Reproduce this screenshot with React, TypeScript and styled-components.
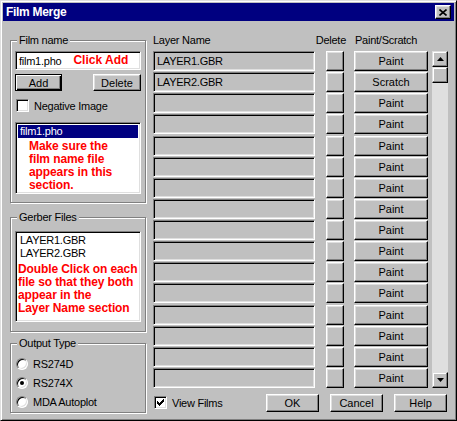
import { Fragment } from "react"
import styled, { createGlobalStyle } from "styled-components"

const GlobalStyle = createGlobalStyle`
  html, body {
    margin: 0;
    padding: 0;
    background: #c0c0c0;
  }
  body {
    font-family: "Liberation Sans", Arial, sans-serif;
    font-size: 11px;
    letter-spacing: -0.25px;
    color: #000;
  }
  * {
    box-sizing: border-box;
  }
`

const LAYERS = [
  { name: "LAYER1.GBR", mode: "Paint" },
  { name: "LAYER2.GBR", mode: "Scratch" },
  ...Array.from({ length: 14 }, () => ({ name: "", mode: "Paint" })),
]

const COLUMNS = "162px 19px 74px"

const Window = styled.div`
  width: 457px;
  height: 421px;
  background: #c0c0c0;
  border: 1px solid;
  border-color: #dfdfdf #000 #000 #dfdfdf;
  box-shadow: inset 1px 1px 0 #fff, inset -1px -1px 0 #808080;
  padding: 2px;
  display: flex;
  flex-direction: column;
`

const TitleBar = styled.div`
  height: 18px;
  background: #000080;
  display: flex;
  align-items: center;
  justify-content: space-between;
  padding: 0 3px 0 3px;
`

const Title = styled.span`
  color: #fff;
  font-weight: bold;
  font-size: 12px;
  letter-spacing: -0.3px;
`

const CloseButton = styled.div`
  width: 16px;
  height: 14px;
  background: #c0c0c0;
  border: 1px solid;
  border-color: #fff #000 #000 #fff;
  box-shadow: inset -1px -1px 0 #808080, inset 1px 1px 0 #dfdfdf;
  display: flex;
  align-items: center;
  justify-content: center;
`

const Body = styled.div`
  flex: 1;
  display: flex;
  gap: 6px;
  padding: 13px 0 0 7px;
`

const LeftColumn = styled.div`
  width: 137px;
  display: flex;
  flex-direction: column;
`

const Group = styled.fieldset<{ $top?: number; $pad?: string }>`
  width: 136px;
  margin: ${(p) => p.$top ?? 0}px 0 0 0;
  padding: ${(p) => p.$pad ?? "4px 4px 8px 4px"};
  border: 1px solid #808080;
  box-shadow: inset 1px 1px 0 #fff, 1px 1px 0 #fff;
  min-width: 0;
`

const Legend = styled.legend`
  padding: 0 2px;
  margin-left: 2px;
  line-height: 13px;
  background: #c0c0c0;
`

const Sunken = styled.div<{ $bg?: string }>`
  background: ${(p) => p.$bg ?? "#fff"};
  border: 1px solid;
  border-color: #808080 #fff #fff #808080;
  box-shadow: inset 1px 1px 0 #000, inset -1px -1px 0 #dfdfdf;
`

const TextInput = styled(Sunken)`
  height: 19px;
  display: flex;
  align-items: center;
  padding-left: 3px;
`

const Hint = styled.span<{ $left?: number }>`
  color: #ff0000;
  font-weight: bold;
  font-size: 12px;
  letter-spacing: 0;
  line-height: 13px;
  margin-left: ${(p) => p.$left ?? 0}px;
`

const HintBlock = styled.div<{ $indent: number; $top: number }>`
  color: #ff0000;
  font-weight: bold;
  font-size: 12px;
  letter-spacing: -0.1px;
  line-height: 13px;
  white-space: nowrap;
  padding-left: ${(p) => p.$indent}px;
  margin-top: ${(p) => p.$top}px;
`

const ButtonRow = styled.div`
  display: flex;
  justify-content: space-between;
  margin-top: 4px;
`

const Button = styled.button<{ $w?: number; $h?: number; $default?: boolean }>`
  width: ${(p) => (p.$w ? `${p.$w}px` : "100%")};
  height: ${(p) => p.$h ?? 20}px;
  padding: 0;
  margin: 0;
  font: inherit;
  color: #000;
  background: #c0c0c0;
  border: 1px solid;
  border-color: ${(p) => (p.$default ? "#000" : "#fff #000 #000 #fff")};
  box-shadow: ${(p) =>
    p.$default
      ? "inset 1px 1px 0 #fff, inset -1px -1px 0 #000, inset -2px -2px 0 #808080"
      : "inset -1px -1px 0 #808080, inset 1px 1px 0 #dfdfdf"};
  display: flex;
  align-items: center;
  justify-content: center;
`

const CheckRow = styled.label<{ $top?: number }>`
  display: flex;
  align-items: center;
  gap: 5px;
  height: 13px;
  margin-top: ${(p) => p.$top ?? 0}px;
  padding-left: 1px;
`

const CheckBox = styled(Sunken)`
  width: 13px;
  height: 13px;
  display: flex;
  align-items: center;
  justify-content: center;
  flex-shrink: 0;
`

const Radio = styled.span<{ $on?: boolean }>`
  position: relative;
  width: 12px;
  height: 12px;
  border-radius: 50%;
  background: #fff;
  border: 1px solid;
  border-color: #808080 #fff #fff #808080;
  box-shadow: inset 1px 1px 0 #000, inset -1px -1px 0 #dfdfdf;
  flex-shrink: 0;

  &::after {
    content: "";
    display: ${(p) => (p.$on ? "block" : "none")};
    position: absolute;
    left: 3px;
    top: 3px;
    width: 4px;
    height: 4px;
    border-radius: 50%;
    background: #000;
  }
`

const ListBox = styled(Sunken)<{ $h: number; $top: number }>`
  height: ${(p) => p.$h}px;
  margin-top: ${(p) => p.$top}px;
  padding: 2px;
  overflow: hidden;
`

const ListItem = styled.div<{ $selected?: boolean }>`
  height: 13px;
  line-height: 13px;
  padding-left: 2px;
  background: ${(p) => (p.$selected ? "#000080" : "transparent")};
  color: ${(p) => (p.$selected ? "#fff" : "#000")};
`

const RadioList = styled.div`
  display: flex;
  flex-direction: column;
  gap: 6px;
`

const RightColumn = styled.div`
  width: 295px;
  display: flex;
  flex-direction: column;
`

const Header = styled.div`
  display: grid;
  grid-template-columns: ${COLUMNS};
  column-gap: 10px;
  height: 13px;
  line-height: 13px;
  margin-bottom: 4px;
  white-space: nowrap;
`

const HeaderLabel = styled.span<{ $align?: string; $shift?: number }>`
  justify-self: ${(p) => p.$align ?? "start"};
  margin-left: ${(p) => p.$shift ?? 0}px;
  margin-right: ${(p) => -(p.$shift ?? 0)}px;
`

const RowsArea = styled.div`
  display: flex;
  gap: 4px;
`

const Rows = styled.div`
  display: grid;
  grid-template-columns: ${COLUMNS};
  grid-auto-rows: 20px;
  column-gap: 10px;
  row-gap: 1.125px;
`

const LayerField = styled(Sunken)`
  display: flex;
  align-items: center;
  padding-left: 3px;
`

const DeleteCell = styled.div`
  display: flex;
  padding-left: 1px;
`

const ScrollBar = styled.div`
  width: 16px;
  display: flex;
  flex-direction: column;
  background: #dfdfdf;
`

const ScrollButton = styled.div`
  width: 16px;
  height: 16px;
  background: #c0c0c0;
  border: 1px solid;
  border-color: #dfdfdf #000 #000 #dfdfdf;
  box-shadow: inset -1px -1px 0 #808080, inset 1px 1px 0 #fff;
  display: flex;
  align-items: center;
  justify-content: center;
`

const Track = styled.div`
  flex: 1;
`

const Footer = styled.div`
  display: flex;
  align-items: center;
  height: 18px;
  margin-top: 6px;
`

const FooterButtons = styled.div`
  margin-left: auto;
  margin-right: 1px;
  display: flex;
  gap: 11px;
`

const Check = () => (
  <svg width="7" height="7" viewBox="0 0 7 7">
    <path d="M0 2h1v1h1v1h1V3h1V2h1V1h1V0h1v3H6v1H5v1H4v1H3v1H2V6H1V5H0z" fill="#000" />
  </svg>
)

const Arrow = ({ down }: { down?: boolean }) => (
  <svg width="7" height="4" viewBox="0 0 7 4">
    <path d={down ? "M0 0h7L3.5 4z" : "M3.5 0L7 4H0z"} fill="#000" />
  </svg>
)

export default function App() {
  return (
    <>
      <GlobalStyle />
      <Window>
        <TitleBar>
          <Title>Film Merge</Title>
          <CloseButton>
            <svg width="8" height="7" viewBox="0 0 8 7">
              <path d="M0.5 0.5l7 6M7.5 0.5l-7 6" stroke="#000" strokeWidth="1.6" />
            </svg>
          </CloseButton>
        </TitleBar>
        <Body>
          <LeftColumn>
            <Group>
              <Legend>Film name</Legend>
              <TextInput>
                film1.pho
                <Hint $left={12}>Click Add</Hint>
              </TextInput>
              <ButtonRow>
                <Button $w={47} $h={17} $default>
                  Add
                </Button>
                <Button $w={48} $h={17}>
                  Delete
                </Button>
              </ButtonRow>
              <CheckRow $top={8}>
                <CheckBox />
                Negative Image
              </CheckRow>
              <ListBox $h={72} $top={10}>
                <ListItem $selected>film1.pho</ListItem>
                <HintBlock $indent={11} $top={2}>
                  Make sure the
                  <br />
                  film name file
                  <br />
                  appears in this
                  <br />
                  section.
                </HintBlock>
              </ListBox>
            </Group>
            <Group $top={8} $pad="7px 4px 9px 4px">
              <Legend>Gerber Files</Legend>
              <ListBox $h={91} $top={0}>
                <ListItem>LAYER1.GBR</ListItem>
                <ListItem>LAYER2.GBR</ListItem>
                <HintBlock $indent={0} $top={3}>
                  Double Click on each
                  <br />
                  file so that they both
                  <br />
                  appear in the
                  <br />
                  Layer Name section
                </HintBlock>
              </ListBox>
            </Group>
            <Group $top={5} $pad="7px 4px 4px 4px">
              <Legend>Output Type</Legend>
              <RadioList>
                <CheckRow>
                  <Radio />
                  RS274D
                </CheckRow>
                <CheckRow>
                  <Radio $on />
                  RS274X
                </CheckRow>
                <CheckRow>
                  <Radio />
                  MDA Autoplot
                </CheckRow>
              </RadioList>
            </Group>
          </LeftColumn>
          <RightColumn>
            <Header>
              <HeaderLabel>Layer Name</HeaderLabel>
              <HeaderLabel $align="end" $shift={2}>
                Delete
              </HeaderLabel>
              <HeaderLabel $shift={1}>Paint/Scratch</HeaderLabel>
            </Header>
            <RowsArea>
              <Rows>
                {LAYERS.map((row, i) => (
                  <Fragment key={i}>
                    <LayerField $bg="#c0c0c0">{row.name}</LayerField>
                    <DeleteCell>
                      <Button />
                    </DeleteCell>
                    <Button>{row.mode}</Button>
                  </Fragment>
                ))}
              </Rows>
              <ScrollBar>
                <ScrollButton>
                  <Arrow />
                </ScrollButton>
                <ScrollButton />
                <Track />
                <ScrollButton>
                  <Arrow down />
                </ScrollButton>
              </ScrollBar>
            </RowsArea>
            <Footer>
              <CheckRow>
                <CheckBox>
                  <Check />
                </CheckBox>
                View Films
              </CheckRow>
              <FooterButtons>
                <Button $w={53} $h={18}>
                  OK
                </Button>
                <Button $w={53} $h={18}>
                  Cancel
                </Button>
                <Button $w={53} $h={18}>
                  Help
                </Button>
              </FooterButtons>
            </Footer>
          </RightColumn>
        </Body>
      </Window>
    </>
  )
}
